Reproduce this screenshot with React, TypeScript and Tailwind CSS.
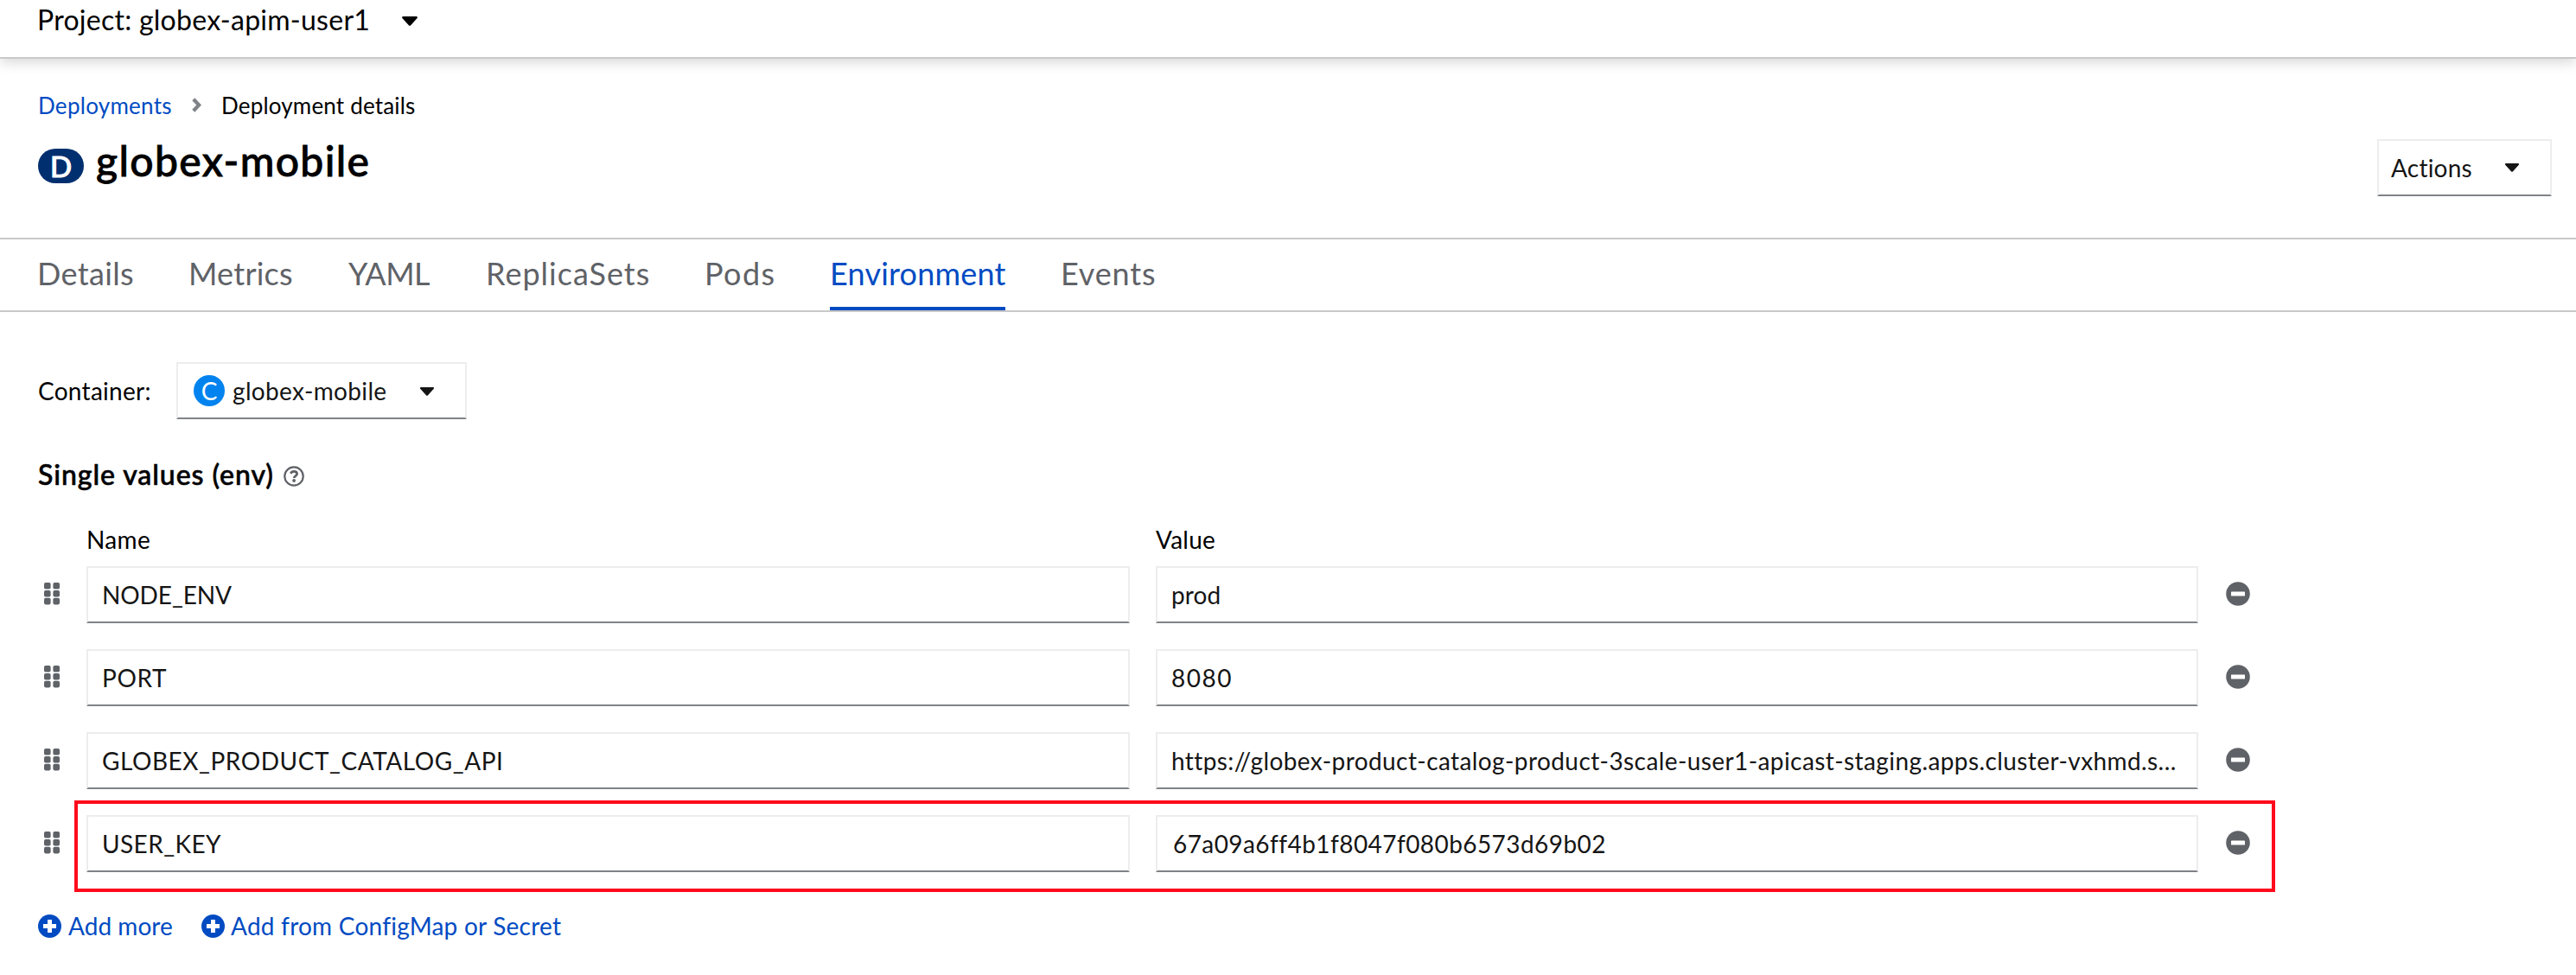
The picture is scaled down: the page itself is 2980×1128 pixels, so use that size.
import type { ReactNode } from "react";

function Caret({ className }: { className: string }) {
  return (
    <svg viewBox="0 0 18 11" className={className} fill="currentColor">
      <path d="M1.200 0h15.600c1 0 1.500 1.200.8 1.900l-7.700 8.500c-.5.600-1.300.600-1.800 0L.4 1.900C-.3 1.200.2 0 1.200 0z" />
    </svg>
  );
}

function Grip() {
  return (
    <svg viewBox="0 0 18 26" className="mb-0.5 h-[26px] w-[18px] text-[#5f6267]" fill="currentColor">
      {[0, 8.9, 17.8].map((y) => (
        <g key={y}>
          <rect x="0" y={y} width="7.600" height="7.600" rx="1.800" />
          <rect x="10.400" y={y} width="7.600" height="7.600" rx="1.800" />
        </g>
      ))}
    </svg>
  );
}

function Minus() {
  return (
    <svg viewBox="0 0 28 28" className="mb-0.5 ml-8 size-7">
      <circle cx="14" cy="14" r="13.800" fill="#5f6267" />
      <rect x="6" y="11.400" width="16" height="5.200" rx="0.700" fill="#fff" />
    </svg>
  );
}

function Plus() {
  return (
    <svg viewBox="0 0 28 28" className="size-[27px] shrink-0">
      <circle cx="14" cy="14" r="14" fill="#004bc2" />
      <path d="M6.200 11.400h5.200V6.200h5.200v5.200h5.200v5.200h-5.200v5.200h-5.200v-5.200H6.200z" fill="#fff" />
    </svg>
  );
}

function Field({ children, className = "" }: { children: ReactNode; className?: string }) {
  return (
    <div
      className={`h-[66px] overflow-hidden border-2 border-[#ededed] border-b-[#7f8286] bg-white pl-4 leading-[62px] whitespace-nowrap text-[#151515] ${className}`}
    >
      {children}
    </div>
  );
}

const tabs = [
  { label: "Details", style: "w-[111px] tracking-[0.340px]" },
  { label: "Metrics", style: "w-[121px] tracking-[0.240px]" },
  { label: "YAML", style: "w-[95px] tracking-[-0.580px]" },
  { label: "ReplicaSets", style: "w-[189px] tracking-[1px]" },
  { label: "Pods", style: "w-[81px] tracking-[1.420px]" },
  { label: "Environment", style: "w-[203px] tracking-[0.200px]", active: true },
  { label: "Events", style: "w-[112px] tracking-[0.840px]" },
];

const rows = [
  { name: "NODE_ENV", nameStyle: "tracking-[-0.090px]", value: "prod", valueStyle: "tracking-[0.100px]" },
  { name: "PORT", nameStyle: "tracking-[0.600px]", value: "8080", valueStyle: "tracking-[1.500px]" },
  {
    name: "GLOBEX_PRODUCT_CATALOG_API",
    nameStyle: "tracking-[0.550px]",
    value: "https://globex-product-catalog-product-3scale-user1-apicast-staging.apps.cluster-vxhmd.s...",
    valueStyle: "tracking-[0.410px]",
  },
  {
    name: "USER_KEY",
    nameStyle: "tracking-[0.420px]",
    value: "67a09a6ff4b1f8047f080b6573d69b02",
    valueStyle: "pl-[18px] tracking-[0.430px]",
    highlighted: true,
  },
];

export default function App() {
  return (
    <div className="h-[1128px] w-[2980px] overflow-hidden bg-white font-['Lato','Liberation_Sans',sans-serif] text-[28px] text-black [font-variant-ligatures:none]">
      <header className="flex h-[68px] items-start border-b-2 border-[#c9c9c9] pl-[43px] shadow-[0_4px_14px_rgba(0,0,0,0.16)]">
        <span className="w-[421px] text-[32px] leading-[46px] tracking-[0.260px] whitespace-nowrap">
          Project: globex-apim-user1
        </span>
        <Caret className="mt-[19px] h-[11px] w-[20px]" />
      </header>

      <section className="h-[209px] border-b-2 border-[#c9c9c9] pt-[34px] pr-7 pl-11">
        <nav className="flex h-10 text-[26px] leading-10">
          <a className="w-[178px] tracking-[0.280px] text-[#004bc2]">Deployments</a>
          <svg viewBox="0 0 11 17" className="mt-[11px] h-[17px] w-[11px]" fill="none" stroke="#7f8286" strokeWidth="4.200">
            <path d="M1.800 1.700 8.200 8.500 1.800 15.300" />
          </svg>
          <span className="ml-[23px] tracking-[0.180px]">Deployment details</span>
        </nav>
        <div className="mt-[13px] flex items-start">
          <span className="mt-[17px] flex h-10 w-[53px] justify-center rounded-full bg-[#002f70] text-[33px] leading-[40px] font-medium text-white [-webkit-text-stroke:1px_white]">
            D
          </span>
          <h1 className="ml-[14px] text-[48px] leading-[62px] font-medium tracking-[1.350px] [-webkit-text-stroke:0.8px_black]">
            globex-mobile
          </h1>
          <div className="mt-1.5 ml-auto flex h-[66px] w-[202px] border-2 border-[#ededed] border-b-[#7f8286] pl-3.5 leading-[62px] text-[#151515]">
            <span className="w-[131px] tracking-[0.220px]">Actions</span>
            <Caret className="mt-[26px] h-[10px] w-[18px]" />
          </div>
        </div>
      </section>

      <nav className="flex h-[84px] gap-16 border-b-2 border-[#c9c9c9] pl-[43px] text-[36px] leading-[78px] text-[#5f6267]">
        {tabs.map((t) => (
          <div
            key={t.label}
            className={`h-[82px] whitespace-nowrap ${t.style} ${t.active ? "border-b-4 border-[#004bc2] text-[#004bc2]" : ""}`}
          >
            {t.label}
          </div>
        ))}
      </nav>

      <main className="pt-[58px] pl-11">
        <div className="flex">
          <span className="w-40 leading-[66px] tracking-[0.280px]">Container:</span>
          <div className="flex h-[66px] w-[336px] border-2 border-[#ededed] border-b-[#7f8286] pl-[18px] leading-[62px] text-[#151515]">
            <span className="mt-[13px] flex size-9 justify-center rounded-full bg-[#0083ee] leading-[36px] text-white">C</span>
            <span className="ml-[9px] w-[216px] tracking-[0.350px]">globex-mobile</span>
            <Caret className="mt-[27px] h-[10px] w-[18px]" />
          </div>
        </div>

        <h2 className="mt-[43px] flex h-10 items-start text-[32px] leading-[42px] font-medium">
          <span className="w-[284px] tracking-[0.940px] whitespace-nowrap [-webkit-text-stroke:0.600px_black]">
            Single values (env)
          </span>
          <svg viewBox="0 0 24 24" className="mt-[11px] size-6" fill="none" stroke="#5f6267">
            <circle cx="12" cy="12" r="10.700" strokeWidth="2.200" />
            <path d="M8.300 8.800c.8-1.700 2-2.400 3.700-2.400 2.100 0 3.600 1.200 3.600 2.900 0 2.300-3.400 2.300-3.400 4.700" strokeWidth="2.800" />
            <circle cx="12.100" cy="17" r="1.900" fill="#5f6267" stroke="none" />
          </svg>
        </h2>

        <div className="mt-10 mb-[15px] flex h-8 pl-14 leading-8">
          <span className="w-[1237px] tracking-[0.370px]">Name</span>
          <span className="tracking-[0.240px]">Value</span>
        </div>

        <div className="flex flex-col gap-[30px]">
          {rows.map((r) => (
            <div key={r.name} className="relative flex h-[66px] items-center">
              <span className="w-14 pl-[7px]">
                <Grip />
              </span>
              <Field className={`w-[1207px] ${r.nameStyle}`}>{r.name}</Field>
              <Field className={`ml-[30px] w-[1206px] ${r.valueStyle}`}>{r.value}</Field>
              <Minus />
              {r.highlighted && (
                <div className="absolute -top-[17px] left-[42px] h-[106px] w-[2546px] border-4 border-[#ff0a1c]" />
              )}
            </div>
          ))}
        </div>

        <div className="mt-[46px] flex h-8 leading-[34px] text-[#004bc2]">
          <div className="flex w-[189px] items-center">
            <Plus />
            <span className="ml-[8px] tracking-[0.040px]">Add more</span>
          </div>
          <div className="flex items-center">
            <Plus />
            <span className="ml-[7px] tracking-[0.230px]">Add from ConfigMap or Secret</span>
          </div>
        </div>
      </main>
    </div>
  );
}
